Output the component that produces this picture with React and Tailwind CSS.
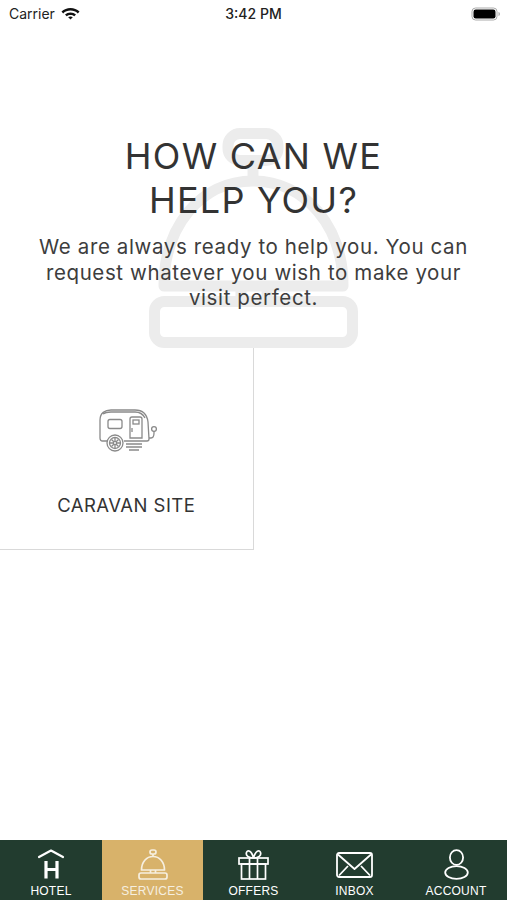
const FONT = "font-['Inter','Liberation_Sans',sans-serif]"

function HotelIcon() {
  return (
    <svg width="28" height="31" viewBox="0 0 28 31" fill="none" stroke="currentColor">
      <path d="M2 8 L14 1.5 L26 8" strokeWidth="2.2" strokeLinecap="round" strokeLinejoin="round" />
      <path d="M9 12 V29.5 M20 12 V29.5 M9 20.5 H20" strokeWidth="3.2" />
    </svg>
  )
}

function BellIcon() {
  return (
    <svg width="30" height="31" viewBox="0 0 30 31" fill="none" stroke="currentColor" strokeWidth="1.7">
      <rect x="12" y="1" width="6" height="4" rx="2" />
      <path d="M15 5 V7.5" />
      <path d="M3.5 21 C3.5 13 8.5 7.5 15 7.5 C21.5 7.5 26.5 13 26.5 21 Z" strokeLinejoin="round" />
      <path d="M12.5 21 V24 M17.5 21 V24" />
      <rect x="1" y="24" width="28" height="6" rx="2" />
    </svg>
  )
}

// big faint bell behind the heading
function WatermarkBell() {
  return (
    <svg className="absolute left-[149px] top-[101px]" width="210" height="220" viewBox="0 0 210 220" fill="none" stroke="#ececec" strokeWidth="11">
      <rect x="79" y="5.5" width="50" height="27" rx="12" />
      <path d="M104 32 V52" />
      <path d="M15 158 C15 98 52 53 104 53 C156 53 194 98 194 158 Z" strokeLinejoin="round" />
      <path d="M92 158 V174 M118 158 V174" />
      <rect x="5.5" y="173.5" width="198" height="41" rx="10" />
    </svg>
  )
}

function GiftIcon() {
  return (
    <svg width="31" height="31" viewBox="0 0 31 31" fill="none" stroke="currentColor" strokeWidth="1.7">
      <rect x="1" y="9" width="29" height="6" />
      <rect x="3.5" y="15" width="24" height="15" />
      <path d="M11.5 9 V30 M19.5 9 V30" />
      <path d="M15.5 9 C10.5 9 7.5 6.5 8.5 3.5 C9.5 0.5 13.5 1.5 15.5 9 C17.5 1.5 21.5 0.5 22.5 3.5 C23.5 6.5 20.5 9 15.5 9 Z" strokeLinejoin="round" />
    </svg>
  )
}

function MailIcon() {
  return (
    <svg width="37" height="26" viewBox="0 0 37 26" fill="none" stroke="currentColor" strokeWidth="1.8" strokeLinejoin="round">
      <rect x="1" y="1" width="35" height="24" rx="2" />
      <path d="M2 2.5 L18.5 17 L35 2.5" />
      <path d="M3 23.5 L12 14 M34 23.5 L25 14" />
    </svg>
  )
}

function UserIcon() {
  return (
    <svg width="25" height="31" viewBox="0 0 25 31" fill="none" stroke="currentColor" strokeWidth="1.8">
      <ellipse cx="12.5" cy="8.5" rx="6.6" ry="7.4" />
      <ellipse cx="12.5" cy="23.5" rx="11.3" ry="6.4" />
    </svg>
  )
}

function CaravanIcon() {
  return (
    <svg className="ml-[6px]" width="60" height="44" viewBox="0 0 60 44" fill="none" stroke="#8a8a8a" strokeWidth="1.3">
      <path d="M8 33 H3.5 C2 33 1 32 1 30 V12 C1 5 6 2 12 2 H36 C43 2 48 6 49 14 L50 31 C50 32.5 49 33 48 33 H25" />
      <path d="M4 6 C6 4.5 9 4 12 4 H36 C40 4 44 6 46 10" />
      <rect x="9" y="11.5" width="14" height="9" rx="2" />
      <path d="M31 30 V11 C31 10 32 9 33 9 H41 C42 9 43 10 43 11 V30 Z" />
      <rect x="34" y="12" width="6" height="4" />
      <path d="M33 20 V24" />
      <circle cx="16" cy="35" r="8" />
      <circle cx="16" cy="35" r="5.5" />
      <circle cx="16" cy="35" r="1.6" />
      <path d="M16 30 V33 M16 37 V40 M11 35 H14 M18 35 H21 M12.5 31.5 L14.8 33.8 M17.2 36.2 L19.5 38.5 M19.5 31.5 L17.2 33.8 M14.8 36.2 L12.5 38.5" />
      <path d="M50 30 H52 C54 30 55 28 55 25 V23" />
      <circle cx="55" cy="21" r="2.4" />
      <path d="M27 36 H43 M27 39 H43 M30 42 H40" />
    </svg>
  )
}

const TABS = [
  { label: 'HOTEL', icon: <HotelIcon /> },
  { label: 'SERVICES', icon: <BellIcon />, active: true },
  { label: 'OFFERS', icon: <GiftIcon /> },
  { label: 'INBOX', icon: <MailIcon /> },
  { label: 'ACCOUNT', icon: <UserIcon /> },
]

export default function App() {
  return (
    <div className={`${FONT} relative w-[507px] h-[900px] overflow-hidden bg-white flex flex-col text-[#333333]`}>
      {/* Status bar */}
      <div className="h-[27px] relative flex items-center justify-between pl-[9px] pr-[6px] text-[14px] text-[#222222] shrink-0">
        <div className="flex items-center gap-[6px]">
          <span>Carrier</span>
          <svg width="19" height="14" viewBox="0 0 19 14" fill="#111111">
            <path d="M9.5 1 C13 1 16 2.4 18.5 4.6 L16.8 6.4 C14.8 4.6 12.3 3.6 9.5 3.6 C6.7 3.6 4.2 4.6 2.2 6.4 L0.5 4.6 C3 2.4 6 1 9.5 1 Z" />
            <path d="M9.5 5.4 C11.6 5.4 13.5 6.2 15 7.5 L13.3 9.3 C12.2 8.4 11 7.9 9.5 7.9 C8 7.9 6.8 8.4 5.7 9.3 L4 7.5 C5.5 6.2 7.4 5.4 9.5 5.4 Z" />
            <path d="M9.5 9.4 C10.4 9.4 11.2 9.7 11.8 10.2 L9.5 12.6 L7.2 10.2 C7.8 9.7 8.6 9.4 9.5 9.4 Z" />
          </svg>
        </div>
        <span className="absolute left-0 right-0 text-center font-medium">3:42 PM</span>
        <svg width="30" height="14" viewBox="0 0 29 14">
          <rect x="0.5" y="1" width="25" height="12" rx="3.5" fill="none" stroke="#aaaaaa" />
          <rect x="2" y="2.5" width="22" height="9" rx="2.2" fill="#000000" />
          <path d="M27 5 C28 5.4 28.4 6 28.4 7 C28.4 8 28 8.6 27 9 Z" fill="#aaaaaa" />
        </svg>
      </div>

      {/* Main */}
      <div className="relative flex-1 flex flex-col">
        <WatermarkBell />

        <div className="relative pt-[107px] px-[34px] text-center">
          <h1 className="text-[36px] leading-[44px] font-normal tracking-[0.035em]">HOW CAN WE<br />HELP YOU?</h1>
          <p className="mt-[12px] text-[20.5px] leading-[25.5px] tracking-[0.03em] text-[#3d3d3d]">
            We are always ready to help you. You can request whatever you wish to make your visit perfect.
          </p>
        </div>

        <div className="relative grid grid-cols-2 mt-[37px]">
          <div className="h-[202px] border-r border-b border-[#d9d9d9] flex flex-col items-center pt-[60px]">
            <CaravanIcon />
            <span className="mt-[41px] text-[18.5px] leading-[24px] tracking-[0.025em]">CARAVAN SITE</span>
          </div>
        </div>
      </div>

      {/* Tab bar */}
      <div className="h-[60px] grid grid-cols-[102px_101px_101px_101px_102px] bg-[#223c2f] shrink-0 font-['Liberation_Sans',sans-serif]">
        {TABS.map(t => (
          <div key={t.label} className={`flex flex-col items-center justify-end ${t.active ? 'bg-[#d8b26a] text-[#f6efe0]' : 'text-white'}`}>
            <div className="h-[31px] flex items-center">{t.icon}</div>
            <span className="mt-[4px] mb-[1px] text-[12px] leading-[15px] tracking-[0.02em]">{t.label}</span>
          </div>
        ))}
      </div>
    </div>
  )
}
